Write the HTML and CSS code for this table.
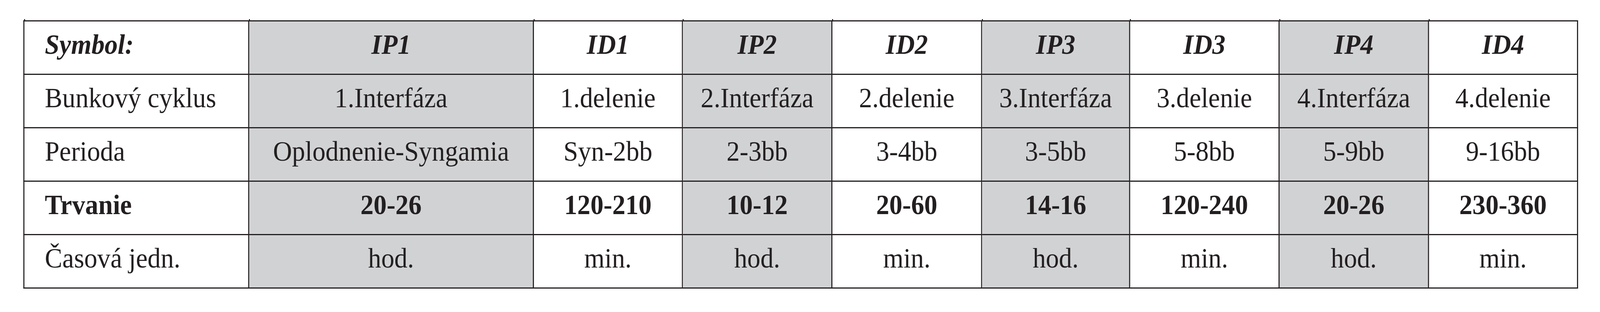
FILE: index.html
```html
<!DOCTYPE html>
<html lang="sk">
<head>
<meta charset="utf-8">
<title>Bunkový cyklus</title>
<link rel="stylesheet" href="styles.css">
</head>
<body>
<div class="frame">
<div class="page">
<table class="phases">
  <colgroup>
    <col class="col-label">
    <col class="col-wide">
    <col class="col-a">
    <col class="col-b">
    <col class="col-c">
    <col class="col-d">
    <col class="col-e">
    <col class="col-f">
    <col class="col-g">
  </colgroup>
  <tr class="head">
    <th class="label">Symbol:</th>
    <th class="shade">IP1</th>
    <th>ID1</th>
    <th class="shade">IP2</th>
    <th>ID2</th>
    <th class="shade">IP3</th>
    <th>ID3</th>
    <th class="shade">IP4</th>
    <th>ID4</th>
  </tr>
  <tr>
    <td class="label">Bunkový cyklus</td>
    <td class="shade">1.Interfáza</td>
    <td>1.delenie</td>
    <td class="shade">2.Interfáza</td>
    <td>2.delenie</td>
    <td class="shade">3.Interfáza</td>
    <td>3.delenie</td>
    <td class="shade">4.Interfáza</td>
    <td>4.delenie</td>
  </tr>
  <tr>
    <td class="label">Perioda</td>
    <td class="shade">Oplodnenie-Syngamia</td>
    <td>Syn-2bb</td>
    <td class="shade">2-3bb</td>
    <td>3-4bb</td>
    <td class="shade">3-5bb</td>
    <td>5-8bb</td>
    <td class="shade">5-9bb</td>
    <td>9-16bb</td>
  </tr>
  <tr class="strong">
    <td class="label">Trvanie</td>
    <td class="shade">20-26</td>
    <td>120-210</td>
    <td class="shade">10-12</td>
    <td>20-60</td>
    <td class="shade">14-16</td>
    <td>120-240</td>
    <td class="shade">20-26</td>
    <td>230-360</td>
  </tr>
  <tr class="last">
    <td class="label">Časová jedn.</td>
    <td class="shade">hod.</td>
    <td>min.</td>
    <td class="shade">hod.</td>
    <td>min.</td>
    <td class="shade">hod.</td>
    <td>min.</td>
    <td class="shade">hod.</td>
    <td>min.</td>
  </tr>
</table>
</div>
</div>
</body>
</html>
```
FILE: styles.css
```css
:root {
  --ink: #231f20;
  --gray: #d1d2d4;
}

html, body {
  margin: 0;
  padding: 0;
  background: #ffffff;
  overflow: hidden;
}

body {
  font-family: "Liberation Serif", "Times New Roman", serif;
  color: var(--ink);
}

.frame {
  width: 100%;
  overflow: hidden;
}

/* The sheet is designed on a 4390px-wide canvas. */
.page {
  width: 4390px;
  padding-top: 52px;
  transform-origin: 0 0;
}

@media (max-width: 4389px) {
  .page {
    transform: scaleX(0.9330);
    margin-right: -294px;
  }
}

.phases {
  margin-left: 64px;
  border-collapse: collapse;
  table-layout: fixed;
  width: 4266px;
}

.col-label { width: 617px; }
.col-wide  { width: 781px; }
.col-a     { width: 409px; }
.col-b     { width: 410px; }
.col-c     { width: 411px; }
.col-d     { width: 406px; }
.col-e     { width: 410px; }
.col-f     { width: 410px; }
.col-g     { width: 409px; }

.phases tr {
  height: 137px;
}

.phases th,
.phases td {
  border: 3px solid var(--ink);
  padding: 18px 0 34px;
  vertical-align: top;
  text-align: center;
  font-size: 72px;
  line-height: 82px;
  font-weight: normal;
  white-space: nowrap;
  position: relative;
}

.phases .label {
  text-align: left;
  padding-left: 56px;
}

.phases .shade {
  background: var(--gray);
}

.head th {
  font-weight: bold;
  font-style: italic;
}

.strong td {
  font-weight: bold;
}

.head .shade {
  box-shadow: 0 -4px 0 var(--gray);
}

.last .shade {
  box-shadow: 0 4px 0 var(--gray);
}

.head th::before,
.last td::before {
  content: "";
  position: absolute;
  left: -1.5px;
  width: 3px;
  height: 5px;
  background: var(--ink);
}

.head th::before { top: -6px; }
.last td::before { bottom: -6px; }
```
